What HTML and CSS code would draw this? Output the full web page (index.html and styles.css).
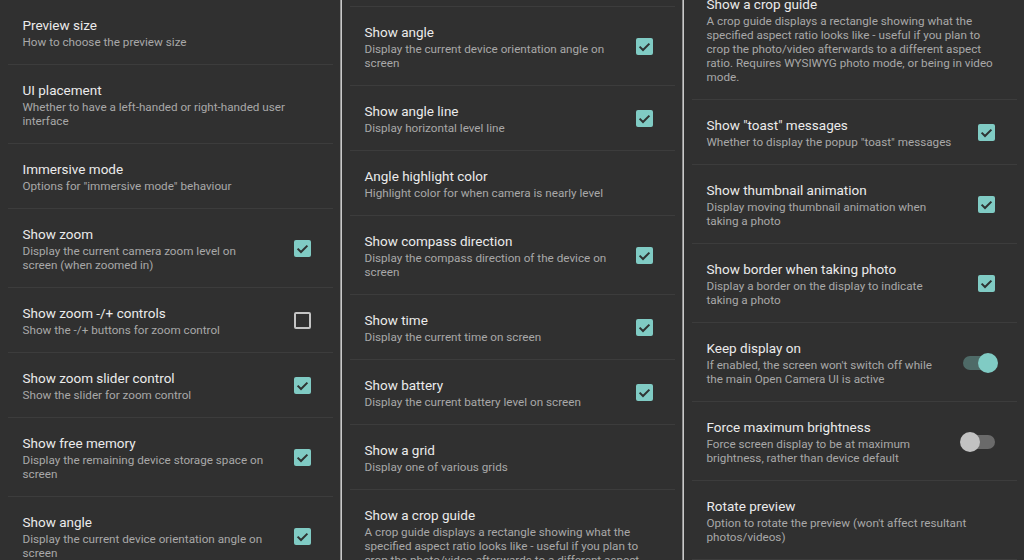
FILE: index.html
```html
<!DOCTYPE html>
<html lang="en">
<head>
<meta charset="utf-8">
<title>Settings</title>
<link rel="stylesheet" href="styles.css">
</head>
<body>
<div class="screen">
  <section class="col">
    <div class="row">
      <div class="text"><div class="title">Preview size</div><div class="summary">How to choose the preview size</div></div>
    </div>
    <div class="row">
      <div class="text"><div class="title">UI placement</div><div class="summary">Whether to have a left-handed or right-handed user<br>interface</div></div>
    </div>
    <div class="row">
      <div class="text"><div class="title">Immersive mode</div><div class="summary">Options for "immersive mode" behaviour</div></div>
    </div>
    <div class="row">
      <div class="text"><div class="title">Show zoom</div><div class="summary">Display the current camera zoom level on<br>screen (when zoomed in)</div></div>
      <span class="check on"><svg viewBox="0 0 17 17" width="17" height="17"><path d="M3.6 8.6 L7 12 L13.4 5.6"/></svg></span>
    </div>
    <div class="row">
      <div class="text"><div class="title">Show zoom -/+ controls</div><div class="summary">Show the -/+ buttons for zoom control</div></div>
      <span class="check off"></span>
    </div>
    <div class="row">
      <div class="text"><div class="title">Show zoom slider control</div><div class="summary">Show the slider for zoom control</div></div>
      <span class="check on"><svg viewBox="0 0 17 17" width="17" height="17"><path d="M3.6 8.6 L7 12 L13.4 5.6"/></svg></span>
    </div>
    <div class="row">
      <div class="text"><div class="title">Show free memory</div><div class="summary">Display the remaining device storage space on<br>screen</div></div>
      <span class="check on"><svg viewBox="0 0 17 17" width="17" height="17"><path d="M3.6 8.6 L7 12 L13.4 5.6"/></svg></span>
    </div>
    <div class="row">
      <div class="text"><div class="title">Show angle</div><div class="summary">Display the current device orientation angle on<br>screen</div></div>
      <span class="check on"><svg viewBox="0 0 17 17" width="17" height="17"><path d="M3.6 8.6 L7 12 L13.4 5.6"/></svg></span>
    </div>
  </section>
  <div class="divider"></div>
  <section class="col">
    <div class="row stub"></div>
    <div class="row">
      <div class="text"><div class="title">Show angle</div><div class="summary">Display the current device orientation angle on<br>screen</div></div>
      <span class="check on"><svg viewBox="0 0 17 17" width="17" height="17"><path d="M3.6 8.6 L7 12 L13.4 5.6"/></svg></span>
    </div>
    <div class="row">
      <div class="text"><div class="title">Show angle line</div><div class="summary">Display horizontal level line</div></div>
      <span class="check on"><svg viewBox="0 0 17 17" width="17" height="17"><path d="M3.6 8.6 L7 12 L13.4 5.6"/></svg></span>
    </div>
    <div class="row">
      <div class="text"><div class="title">Angle highlight color</div><div class="summary">Highlight color for when camera is nearly level</div></div>
    </div>
    <div class="row">
      <div class="text"><div class="title">Show compass direction</div><div class="summary">Display the compass direction of the device on<br>screen</div></div>
      <span class="check on"><svg viewBox="0 0 17 17" width="17" height="17"><path d="M3.6 8.6 L7 12 L13.4 5.6"/></svg></span>
    </div>
    <div class="row">
      <div class="text"><div class="title">Show time</div><div class="summary">Display the current time on screen</div></div>
      <span class="check on"><svg viewBox="0 0 17 17" width="17" height="17"><path d="M3.6 8.6 L7 12 L13.4 5.6"/></svg></span>
    </div>
    <div class="row">
      <div class="text"><div class="title">Show battery</div><div class="summary">Display the current battery level on screen</div></div>
      <span class="check on"><svg viewBox="0 0 17 17" width="17" height="17"><path d="M3.6 8.6 L7 12 L13.4 5.6"/></svg></span>
    </div>
    <div class="row">
      <div class="text"><div class="title">Show a grid</div><div class="summary">Display one of various grids</div></div>
    </div>
    <div class="row">
      <div class="text"><div class="title">Show a crop guide</div><div class="summary">A crop guide displays a rectangle showing what the<br>specified aspect ratio looks like - useful if you plan to<br>crop the photo/video afterwards to a different aspect<br>ratio. Requires WYSIWYG photo mode, or being in video<br>mode.</div></div>
    </div>
  </section>
  <div class="divider"></div>
  <section class="col">
    <div class="row scrolled">
      <div class="text"><div class="title">Show a crop guide</div><div class="summary">A crop guide displays a rectangle showing what the<br>specified aspect ratio looks like - useful if you plan to<br>crop the photo/video afterwards to a different aspect<br>ratio. Requires WYSIWYG photo mode, or being in video<br>mode.</div></div>
    </div>
    <div class="row">
      <div class="text"><div class="title">Show "toast" messages</div><div class="summary">Whether to display the popup "toast" messages</div></div>
      <span class="check on"><svg viewBox="0 0 17 17" width="17" height="17"><path d="M3.6 8.6 L7 12 L13.4 5.6"/></svg></span>
    </div>
    <div class="row">
      <div class="text"><div class="title">Show thumbnail animation</div><div class="summary">Display moving thumbnail animation when<br>taking a photo</div></div>
      <span class="check on"><svg viewBox="0 0 17 17" width="17" height="17"><path d="M3.6 8.6 L7 12 L13.4 5.6"/></svg></span>
    </div>
    <div class="row">
      <div class="text"><div class="title">Show border when taking photo</div><div class="summary">Display a border on the display to indicate<br>taking a photo</div></div>
      <span class="check on"><svg viewBox="0 0 17 17" width="17" height="17"><path d="M3.6 8.6 L7 12 L13.4 5.6"/></svg></span>
    </div>
    <div class="row">
      <div class="text"><div class="title">Keep display on</div><div class="summary">If enabled, the screen won't switch off while<br>the main Open Camera UI is active</div></div>
      <span class="switch on"><span class="track"></span><span class="thumb"></span></span>
    </div>
    <div class="row">
      <div class="text"><div class="title">Force maximum brightness</div><div class="summary">Force screen display to be at maximum<br>brightness, rather than device default</div></div>
      <span class="switch off"><span class="track"></span><span class="thumb"></span></span>
    </div>
    <div class="row">
      <div class="text"><div class="title">Rotate preview</div><div class="summary">Option to rotate the preview (won't affect resultant<br>photos/videos)</div></div>
    </div>
  </section>
</div>
</body>
</html>
```

FILE: styles.css
```css
html, body {
  margin: 0;
  padding: 0;
  background: #303030;
}

body {
  width: 1024px;
  height: 560px;
  overflow: hidden;
  font-family: Roboto, "Noto Sans", "Liberation Sans", sans-serif;
}

.screen {
  display: flex;
  height: 560px;
}

.col {
  width: 340px;
  flex: none;
  overflow: hidden;
  display: flex;
  flex-direction: column;
}

.divider {
  width: 1px;
  flex: none;
  background: #c9c9c9;
  border-left: 1px solid #8f8f8f;
}

.row {
  flex: none;
  display: flex;
  align-items: center;
  margin: 0 7.5px;
  padding: 16px 22px 15px 15px;
  border-bottom: 1px solid #3c3c3c;
}

.row.stub {
  height: 5.5px;
  padding: 0;
}

.row.scrolled {
  margin-top: -21px;
}

.text {
  flex: 1;
  min-width: 0;
}

.title {
  font-size: 13.5px;
  line-height: 19px;
  color: #ebebeb;
  white-space: nowrap;
}

.summary {
  font-size: 11.7px;
  line-height: 14px;
  color: #a8a8a8;
  white-space: nowrap;
}

.check {
  flex: none;
  width: 17px;
  height: 17px;
  margin-left: 16px;
  box-sizing: border-box;
  border-radius: 2px;
}

.check.on {
  background: #80cbc4;
}

.check.on svg {
  display: block;
}

.check.on path {
  fill: none;
  stroke: #2e3332;
  stroke-width: 2;
}

.check.off {
  border: 2px solid #c4c4c4;
}

.switch {
  flex: none;
  position: relative;
  width: 38px;
  height: 20px;
  margin-left: 12px;
  margin-right: -3.5px;
}

.switch .track {
  position: absolute;
  left: 3px;
  top: 3px;
  width: 32px;
  height: 14px;
  border-radius: 7px;
}

.switch .thumb {
  position: absolute;
  top: 0;
  width: 20px;
  height: 20px;
  border-radius: 50%;
}

.switch.on .track {
  background: #4e6a67;
}

.switch.on .thumb {
  right: 0;
  background: #80cbc4;
}

.switch.off .track {
  background: #6a6a6a;
}

.switch.off .thumb {
  left: 0;
  background: #c2c2c2;
}
```
